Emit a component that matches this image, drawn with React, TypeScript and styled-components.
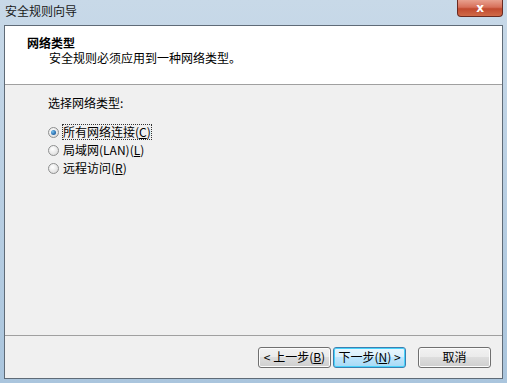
import React from "react";
import styled, { createGlobalStyle } from "styled-components";

const Global = createGlobalStyle`
  html, body { margin: 0; padding: 0; }
  body {
    width: 507px; height: 383px; overflow: hidden;
    font-family: "Noto Sans CJK SC", "Liberation Sans", sans-serif;
    font-size: 12px;
    color: #000;
  }
`;

const Frame = styled.div`
  width: 507px;
  height: 383px;
  box-sizing: border-box;
  background: linear-gradient(180deg, #c8d9e8 0%, #bcd1e4 40%, #aac5dd 100%);
  display: flex;
  flex-direction: column;
`;

const TitleBar = styled.div`
  height: 25px;
  display: flex;
  align-items: flex-start;
  justify-content: space-between;
  padding-left: 5px;
  padding-right: 4px;
`;

const Title = styled.div`
  font-size: 12px;
  line-height: 12px;
  margin-top: 5px;
  color: #1a1a1a;
`;

const CloseBtn = styled.div`
  width: 44px;
  height: 16px;
  border: 1px solid #6a2a20;
  border-top: none;
  border-radius: 0 0 4px 4px;
  background: linear-gradient(180deg, #e8a08e 0%, #d7705a 45%, #c14a2f 55%, #d06a48 100%);
  display: flex;
  align-items: center;
  justify-content: center;
  color: #fff;
  font-family: "DejaVu Sans", sans-serif;
  font-weight: bold;
  font-size: 12px;
  line-height: 12px;
`;

const Client = styled.div`
  margin: 0 4px 4px 4px;
  flex: 1;
  border: 1px solid #5f6b77;
  background: #f0f0f0;
  display: flex;
  flex-direction: column;
`;

const Header = styled.div`
  height: 59px;
  background: #fff;
  border-bottom: 1px solid #a0a0a0;
  padding: 10px 0 0 22px;
  box-sizing: border-box;
`;

const HeaderTitle = styled.div`
  font-weight: bold;
  font-size: 12px;
  line-height: 14px;
`;

const HeaderSub = styled.div`
  padding-left: 22px;
  margin-top: 1px;
  font-size: 12px;
  line-height: 14px;
`;

const Body = styled.div`
  flex: 1;
  padding: 11px 0 0 43px;
  border-bottom: 1px solid #a0a0a0;
`;

const Prompt = styled.div`
  line-height: 14px;
  margin-bottom: 15px;
`;

const Options = styled.div`
  display: flex;
  flex-direction: column;
  gap: 4px;
`;

const Option = styled.div`
  display: flex;
  align-items: center;
  gap: 4px;
  height: 14px;
  line-height: 14px;
  overflow: visible;
`;

const Radio = styled.span<{ $checked?: boolean }>`
  width: 11px;
  height: 11px;
  border-radius: 50%;
  border: 1px solid #8e8f8f;
  background: radial-gradient(circle at 40% 35%, #ffffff 0%, #e6e6e6 60%, #cfcfcf 100%);
  box-sizing: border-box;
  position: relative;
  flex: none;
  &::after {
    content: "";
    display: ${(p) => (p.$checked ? "block" : "none")};
    position: absolute;
    left: 2px;
    top: 2px;
    width: 5px;
    height: 5px;
    border-radius: 50%;
    background: radial-gradient(circle at 35% 35%, #7ac2ee 0%, #2a6fb0 60%, #15497e 100%);
  }
`;

const Label = styled.span<{ $focus?: boolean }>`
  display: block;
  height: 14px;
  line-height: 14px;
  outline: ${(p) => (p.$focus ? "1px dotted #333" : "none")};
`;

const Mnemonic = styled.span`
  text-decoration: underline;
`;

const Footer = styled.div`
  height: 42px;
  display: flex;
  align-items: center;
  padding-right: 11px;
  justify-content: flex-end;
  box-sizing: border-box;
`;

const Button = styled.button<{ $default?: boolean; $gapLeft?: number }>`
  width: 73px;
  height: 21px;
  margin-left: ${(p) => p.$gapLeft ?? 2}px;
  border: 1px solid ${(p) => (p.$default ? "#3c7fb1" : "#707070")};
  border-radius: 3px;
  background: ${(p) =>
    p.$default
      ? "linear-gradient(180deg, #eaf6fd 0%, #d9f0fc 45%, #bee6fd 50%, #a7d9f5 100%)"
      : "linear-gradient(180deg, #f2f2f2 0%, #ebebeb 45%, #dddddd 50%, #cfcfcf 100%)"};
  box-shadow: inset 0 0 0 1px ${(p) => (p.$default ? "#48d3fb" : "#fcfcfc")};
  font-family: "Noto Sans CJK SC", "Liberation Sans", sans-serif;
  font-size: 12px;
  line-height: 12px;
  padding: 0;
  color: #000;
  display: flex;
  align-items: center;
  justify-content: center;
`;

export default function App() {
  return (
    <>
      <Global />
      <Frame>
        <TitleBar>
          <Title>安全规则向导</Title>
          <CloseBtn>x</CloseBtn>
        </TitleBar>
        <Client>
          <Header>
            <HeaderTitle>网络类型</HeaderTitle>
            <HeaderSub>安全规则必须应用到一种网络类型。</HeaderSub>
          </Header>
          <Body>
            <Prompt>选择网络类型:</Prompt>
            <Options>
              <Option>
                <Radio $checked />
                <Label $focus>所有网络连接(<Mnemonic>C</Mnemonic>)</Label>
              </Option>
              <Option>
                <Radio />
                <Label>局域网(LAN)(<Mnemonic>L</Mnemonic>)</Label>
              </Option>
              <Option>
                <Radio />
                <Label>远程访问(<Mnemonic>R</Mnemonic>)</Label>
              </Option>
            </Options>
          </Body>
          <Footer>
            <Button>&lt; 上一步(<Mnemonic>B</Mnemonic>)</Button>
            <Button $default>下一步(<Mnemonic>N</Mnemonic>) &gt;</Button>
            <Button $gapLeft={12}>取消</Button>
          </Footer>
        </Client>
      </Frame>
    </>
  );
}
